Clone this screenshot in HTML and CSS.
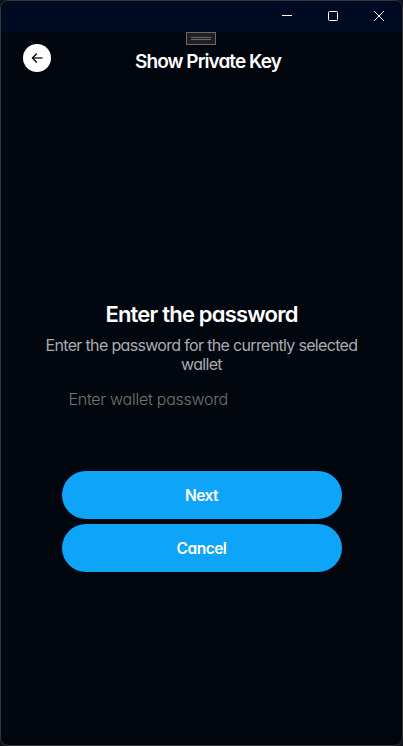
FILE: index.html
```html
<!DOCTYPE html>
<html lang="en">
<head>
<meta charset="utf-8">
<title>Show Private Key</title>
<link rel="stylesheet" href="styles.css">
</head>
<body>
<div class="window">
  <div class="titlebar">
    <svg class="control" viewBox="0 0 46 31"><path d="M22 14.5h10"/></svg>
    <svg class="control" viewBox="0 0 46 31"><rect x="22.5" y="10.5" width="9" height="9" rx="1"/></svg>
    <svg class="control" viewBox="0 0 46 31"><path d="M22.2 10.2l9.6 9.6M31.8 10.2l-9.6 9.6"/></svg>
  </div>
  <div class="handle"><i></i><i></i></div>
  <header class="header">
    <button class="back" aria-label="Back">
      <svg viewBox="0 0 28 28"><path class="shaft" d="M19 14H10"/><path d="M13.4 10L9.5 14l3.9 4"/></svg>
    </button>
    <h1 class="title">Show Private Key</h1>
  </header>
  <main class="content">
    <h2 class="heading">Enter the password</h2>
    <p class="hint">Enter the password for the currently selected<br>wallet</p>
    <input class="field" type="password" placeholder="Enter wallet password">
    <button class="action">Next</button>
    <button class="action">Cancel</button>
  </main>
</div>
</body>
</html>
```
FILE: styles.css
```css
* { box-sizing: border-box; }
html { background: #10131a; }
body { margin: 0; font-family: Inter, "Liberation Sans", sans-serif; font-feature-settings: "cv11"; }
.window {
  width: 403px; height: 746px; overflow: hidden; position: relative;
  border: 1px solid #333539; border-radius: 8px; background: #02060e;
}
.titlebar { height: 31px; padding-right: 4px; display: flex; justify-content: flex-end; background: #000a22; }
.control { flex: none; width: 46px; height: 31px; fill: none; stroke: #fff; stroke-width: 1; }
.handle {
  position: absolute; left: 185px; top: 31px; width: 30px; height: 13px;
  border: 1px solid #686868; background: #202020;
  display: flex; flex-direction: column; align-items: center; justify-content: center; gap: 1px;
}
.handle i { width: 20px; height: 1px; background: #686868; }
.header { height: 60px; padding: 12px 22px 0; display: flex; align-items: flex-start; }
.back { width: 28px; height: 28px; padding: 0; border: 0; border-radius: 50%; background: #fff; }
.back svg { display: block; width: 28px; height: 28px; fill: none; stroke: #111; stroke-width: 1.6; stroke-linejoin: round; stroke-linecap: round; }
.back .shaft { stroke: #333; }
.title { margin: 6px 0 0 84px; font-size: 19px; line-height: 24px; font-weight: 600; letter-spacing: -0.93px; color: #fff; white-space: nowrap; }
.content { padding-top: 208px; display: flex; flex-direction: column; align-items: center; }
.heading { margin: 0; font-size: 22px; line-height: 28px; font-weight: 600; letter-spacing: -0.8px; color: #fff; white-space: nowrap; }
.hint { margin: 8px 0 0; font-size: 16px; line-height: 19px; letter-spacing: -0.67px; color: #a9abae; text-align: center; white-space: nowrap; }
.field { width: 280px; height: 32px; margin: 9px 0 0; padding: 0 7px; border: 0; outline: 0; background: transparent; font: 300 16px/24px Inter, sans-serif; font-feature-settings: "cv11"; letter-spacing: -0.25px; color: #fff; }
.field::placeholder { color: #73746f; opacity: 1; }
.action { width: 280px; height: 48px; margin: 56px 0 0; padding: 2px 0 0; border: 0; border-radius: 24px; background: #0ea4f7; color: #fff; font: 600 15.5px/24px Inter, sans-serif; font-feature-settings: "cv11"; letter-spacing: -0.5px; }
.action + .action { margin-top: 5px; }
```
